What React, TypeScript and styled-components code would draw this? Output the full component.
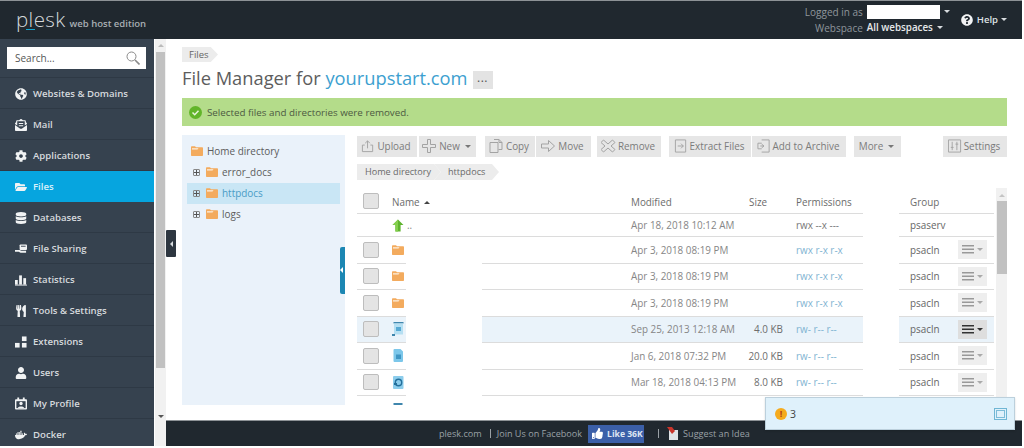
import React from "react";
import styled, { createGlobalStyle } from "styled-components";
import {
  FaGlobeAmericas,
  FaEnvelopeOpenText,
  FaCog,
  FaFolderOpen,
  FaDatabase,
  FaUser,
  FaDocker,
  FaUtensils,
  FaThumbsUp,
  FaQuestionCircle,
} from "react-icons/fa";

const GlobalStyle = createGlobalStyle`
  html, body {
    margin: 0;
    padding: 0;
    width: 1024px;
    height: 448px;
    overflow: hidden;
    background: #fff;
    font-family: "Open Sans", "Liberation Sans", sans-serif;
  }
  * { box-sizing: border-box; }
`;

const Page = styled.div`
  position: relative;
  width: 1024px;
  height: 448px;
  display: flex;
  flex-direction: column;
  background: #fff;
  overflow: hidden;
`;

const Header = styled.header`
  flex: none;
  height: 39px;
  width: 1022px;
  background: #20282f;
  border-top: 1px solid #8d9296;
  display: flex;
  align-items: center;
  justify-content: space-between;
  padding: 0 15px 0 16px;
`;

const Logo = styled.div`
  display: flex;
  align-items: baseline;
  gap: 4px;
  margin-top: -3px;
`;

const LogoWord = styled.span`
  position: relative;
  font-size: 20.5px;
  font-weight: 300;
  letter-spacing: 0.4px;
  color: #d4d8db;
  &::after {
    content: "";
    position: absolute;
    left: 10px;
    bottom: 3px;
    width: 9px;
    height: 1px;
    background: #19a5cf;
  }
`;

const LogoEdition = styled.span`
  font-size: 9.5px;
  font-weight: 600;
  color: #a8aeb3;
`;

const UserArea = styled.div`
  display: flex;
  align-items: center;
  gap: 11px;
  margin-top: -1px;
`;

const Account = styled.div`
  display: grid;
  grid-template-columns: auto auto;
  column-gap: 4px;
  row-gap: 2px;
  font-size: 10px;
  line-height: 14px;
`;

const AccountLabel = styled.span`
  color: #8f969c;
  text-align: right;
`;

const AccountValue = styled.span`
  display: flex;
  align-items: center;
  gap: 1px;
  color: #e6e8ea;
  font-weight: 600;
  font-size: 9.8px;
`;

const NameBox = styled.span`
  display: block;
  width: 73px;
  height: 14px;
  background: #fff;
`;

const Caret = styled.span<{ $color?: string }>`
  display: inline-block;
  width: 0;
  height: 0;
  margin-left: 3px;
  border-left: 3px solid transparent;
  border-right: 3px solid transparent;
  border-top: 3px solid ${({ $color }) => $color ?? "#d8dcdf"};
`;

const UpCaret = styled.span`
  display: inline-block;
  width: 0;
  height: 0;
  margin-left: 2px;
  vertical-align: 2px;
  border-left: 3px solid transparent;
  border-right: 3px solid transparent;
  border-bottom: 3px solid #444;
`;

const Help = styled.div`
  display: flex;
  align-items: center;
  gap: 4px;
  font-size: 9.5px;
  font-weight: 600;
  color: #dfe2e4;
  svg {
    color: #f2f3f4;
    font-size: 12px;
  }
  ${Caret} {
    margin-left: -1px;
  }
`;

const Body = styled.div`
  flex: none;
  height: 407px;
  display: flex;
`;

const Sidebar = styled.nav`
  flex: none;
  width: 154px;
  height: 407px;
  background: #36424f;
  overflow: hidden;
`;

const SearchWrap = styled.div`
  height: 39px;
  padding: 8px 8px 0 7px;
  border-bottom: 1px solid #2e3945;
`;

const SearchBox = styled.div`
  height: 22px;
  background: #fff;
  display: flex;
  align-items: center;
  justify-content: space-between;
  padding: 0 6px 0 8px;
  font-size: 10px;
  color: #555;
`;

const NavItem = styled.div<{ $active?: boolean }>`
  height: 31px;
  display: flex;
  align-items: center;
  padding: 1px 0 0 15px;
  gap: 6px;
  font-size: 9.6px;
  font-weight: 600;
  color: ${({ $active }) => ($active ? "#d9f1fb" : "#d6dade")};
  background: ${({ $active }) => ($active ? "#06a5df" : "transparent")};
  border-bottom: 1px solid ${({ $active }) => ($active ? "#06a5df" : "#2e3945")};
`;

const NavIcon = styled.span`
  flex: none;
  width: 12px;
  height: 13px;
  display: flex;
  align-items: center;
  justify-content: center;
  font-size: 12px;
  color: #f1f3f4;
`;

const PageScroll = styled.div`
  flex: none;
  width: 11px;
  margin-left: 1px;
  padding-top: 5px;
  background: #f1f1f1;
  display: flex;
  flex-direction: column;
  align-items: center;
`;

const ScrollCaret = styled.span<{ $down?: boolean; $color?: string }>`
  flex: none;
  width: 0;
  height: 0;
  border-left: 3px solid transparent;
  border-right: 3px solid transparent;
  ${({ $down, $color }) =>
    $down
      ? `border-top: 3px solid ${$color ?? "#555"};`
      : `border-bottom: 3px solid ${$color ?? "#bbb"};`}
`;

const PageThumb = styled.div`
  width: 9px;
  height: 316px;
  margin-top: 5px;
  background: #c1c1c1;
`;

const PageScrollDown = styled.div`
  margin-top: auto;
  padding-bottom: 6px;
`;

const Main = styled.div`
  flex: none;
  width: 856px;
  display: flex;
  flex-direction: column;
`;

const Content = styled.main`
  flex: none;
  height: 381px;
  padding: 8px 15px 0 16px;
`;

const Crumb = styled.div`
  width: 36px;
  height: 15px;
  padding-left: 7px;
  font-size: 9.5px;
  line-height: 15px;
  color: #666;
  background: #ececec;
  clip-path: polygon(0 0, 80% 0, 100% 50%, 80% 100%, 0 100%);
`;

const TitleRow = styled.div`
  display: flex;
  align-items: center;
  gap: 5px;
  height: 24px;
  margin-top: 4px;
`;

const Title = styled.h1`
  margin: 0;
  font-size: 18.3px;
  font-weight: 400;
  line-height: 24px;
  color: #5d5d5d;
  white-space: nowrap;
`;

const TitleLink = styled.span`
  color: #3d9fd0;
`;

const DotsButton = styled.div`
  width: 20px;
  height: 18px;
  margin-top: 3px;
  background: #e3e3e3;
  color: #555;
  font-size: 12px;
  line-height: 13px;
  text-align: center;
  letter-spacing: 0.5px;
`;

const Alert = styled.div`
  height: 28px;
  margin-top: 8px;
  background: #b4dc8a;
  display: flex;
  align-items: center;
  padding-left: 7px;
  gap: 5px;
  font-size: 9.8px;
  color: #4d5a42;
`;

const Workspace = styled.div`
  display: flex;
  gap: 12px;
  margin-top: 9px;
`;

const Tree = styled.aside`
  position: relative;
  flex: none;
  width: 163px;
  height: 270px;
  background: #eaf2fa;
  padding: 6px 5px 0;
`;

const TreeHandle = styled.div`
  position: absolute;
  right: 0;
  top: 112px;
  width: 5px;
  height: 47px;
  background: #1c87b3;
  border-radius: 2px 0 0 2px;
`;

const TreeRow = styled.div<{ $selected?: boolean; $root?: boolean }>`
  height: 21px;
  display: flex;
  align-items: center;
  gap: 4px;
  padding: 0 0 1px ${({ $root }) => ($root ? "4px" : "6px")};
  font-size: 9.95px;
  color: ${({ $selected }) => ($selected ? "#4a9cc6" : "#5c5c5c")};
  background: ${({ $selected }) => ($selected ? "#c9e6f5" : "transparent")};
`;

const Expander = styled.span`
  flex: none;
  width: 7px;
  height: 7px;
  margin-right: 2px;
  border: 1px solid #888;
  border-radius: 1px;
  background:
    linear-gradient(#555, #555) center / 5px 1px no-repeat,
    linear-gradient(#555, #555) center / 1px 5px no-repeat;
`;

const Browser = styled.section`
  flex: none;
  width: 650px;
  padding-top: 1px;
`;

const Toolbar = styled.div`
  display: flex;
  height: 21px;
`;

const ToolButton = styled.div<{ $w: number; $gap?: number; $push?: boolean }>`
  flex: none;
  width: ${({ $w }) => $w}px;
  margin-right: ${({ $gap }) => $gap ?? 0}px;
  margin-left: ${({ $push }) => ($push ? "auto" : "0")};
  height: 21px;
  padding: 0 2px 1px 0;
  background: #e6e6e6;
  color: #7b7b7b;
  font-size: 9.9px;
  display: flex;
  align-items: center;
  justify-content: center;
  gap: 2px;
  white-space: nowrap;
  svg {
    flex: none;
  }
`;

const PathBar = styled.div`
  display: flex;
  margin-top: 7px;
  height: 16px;
`;

const PathStep = styled.div<{ $w: number; $first?: boolean }>`
  width: ${({ $w }) => $w}px;
  margin-left: ${({ $first }) => ($first ? "0" : "-7px")};
  padding-left: ${({ $first }) => ($first ? "8px" : "14px")};
  font-size: 9.1px;
  line-height: 16px;
  color: #696969;
  background: #ececec;
  clip-path: ${({ $first }) =>
    $first
      ? "polygon(0 0, calc(100% - 7px) 0, 100% 50%, calc(100% - 7px) 100%, 0 100%)"
      : "polygon(0 0, calc(100% - 7px) 0, 100% 50%, calc(100% - 7px) 100%, 0 100%, 7px 50%)"};
`;

const TableArea = styled.div`
  margin-top: 8px;
  height: 217px;
  overflow: hidden;
  display: flex;
`;

const Rows = styled.div`
  flex: none;
  width: 637px;
`;

const Row = styled.div<{ $h: number }>`
  display: grid;
  grid-template-columns: 49px 76px 149px 109px 43px 80px 36px 95px;
  height: ${({ $h }) => $h}px;
  font-size: 9.9px;
  color: #868686;
`;

const Cell = styled.div<{ $hi?: boolean; $plain?: boolean; $span?: number }>`
  display: flex;
  align-items: center;
  min-width: 0;
  white-space: nowrap;
  background: ${({ $hi }) => ($hi ? "#eaf3fa" : "#fff")};
  border-bottom: ${({ $plain }) => ($plain ? "none" : "1px solid #dcdcdc")};
  ${({ $span }) => ($span ? `grid-column: span ${$span};` : "")}
`;

const HeadText = styled.span<{ $left?: number }>`
  color: #6b6b6b;
  margin-left: ${({ $left }) => $left ?? 0}px;
  padding-top: 2px;
`;

const SizeCell = styled(Cell)`
  justify-content: flex-end;
  color: #6d6d6d;
`;

const Perms = styled.span<{ $link?: boolean }>`
  margin-left: 13px;
  color: ${({ $link }) => ($link ? "#7fb4d2" : "#777")};
`;

const GroupCell = styled(Cell)`
  padding-left: 11px;
  color: #666;
`;

const Check = styled.span<{ $low?: boolean }>`
  flex: none;
  width: 16px;
  height: 16px;
  margin: ${({ $low }) => ($low ? "12px" : "0")} 13px 0 6px;
  background: #e4e4e4;
  border: 1px solid #bdbdbd;
  border-radius: 2px;
`;

const UpDirIndent = styled.span`
  flex: none;
  width: 35px;
`;

const UpDirName = styled.span`
  margin-left: 3px;
`;

const RowMenu = styled.div<{ $hot?: boolean }>`
  flex: none;
  width: 29px;
  height: 19px;
  margin-left: auto;
  margin-right: 7px;
  display: flex;
  align-items: center;
  justify-content: center;
  background: ${({ $hot }) => ($hot ? "#dedede" : "#eeeeee")};
  color: ${({ $hot }) => ($hot ? "#333" : "#999")};
`;

const TableScroll = styled.div`
  flex: none;
  width: 11px;
  margin-left: 2px;
  background: #f1f1f1;
  display: flex;
  flex-direction: column;
  align-items: center;
  padding-top: 6px;
`;

const TableThumb = styled.div`
  width: 10px;
  height: 73px;
  margin-top: 4px;
  background: #c1c1c1;
`;

const SideHandle = styled.div`
  position: absolute;
  left: 166px;
  top: 230px;
  width: 10px;
  height: 27px;
  background: #2d3640;
  border-radius: 1px;
  display: flex;
  align-items: center;
  justify-content: center;
`;

const HandleArrow = styled.span`
  width: 0;
  height: 0;
  border-top: 3px solid transparent;
  border-bottom: 3px solid transparent;
  border-right: 3px solid #d8dcdf;
`;

const TreeHandleArrow = styled(HandleArrow)`
  position: absolute;
  left: 0;
  top: 20px;
  border-right-color: #fff;
`;

const Footer = styled.footer`
  flex: none;
  height: 26px;
  background: #20282f;
  border-top: 1px solid #8d9296;
  display: flex;
  align-items: center;
  padding-left: 273px;
  font-size: 9.1px;
  color: #9aa1a6;
`;

const FooterBar = styled.span<{ $gapL: number; $gapR: number }>`
  width: 1px;
  height: 9px;
  background: #9aa1a6;
  margin-left: ${({ $gapL }) => $gapL}px;
  margin-right: ${({ $gapR }) => $gapR}px;
`;

const LikeButton = styled.span`
  width: 56px;
  height: 18px;
  margin-left: 6px;
  background: #3b5fa8;
  color: #dfe6f3;
  font-size: 8.6px;
  font-weight: 700;
  white-space: nowrap;
  display: flex;
  align-items: center;
  gap: 4px;
  padding-left: 4px;
  svg {
    flex: none;
    font-size: 11px;
    color: #fff;
  }
`;

const Notice = styled.div`
  position: absolute;
  left: 765px;
  top: 397px;
  width: 250px;
  height: 33px;
  background: #dff1fb;
  border: 1px solid #bcd0dc;
  box-shadow: 0 1px 2px rgba(0, 0, 0, 0.15);
  display: flex;
  align-items: center;
  padding: 0 7px 0 9px;
  gap: 3px;
  font-size: 10.5px;
  color: #444;
`;

const NoticeBadge = styled.span`
  width: 12px;
  height: 12px;
  border-radius: 50%;
  background: #f5ab1e;
  color: #b3411a;
  font-size: 9px;
  font-weight: 700;
  line-height: 12px;
  text-align: center;
`;

const NoticeExpand = styled.span`
  width: 13px;
  height: 12px;
  margin-left: auto;
  border: 1px solid #6fb6d4;
  display: flex;
  align-items: center;
  justify-content: center;
  &::after {
    content: "";
    width: 7px;
    height: 6px;
    border: 1px solid #7cbcd8;
  }
`;

const FolderIcon = () => (
  <svg width="12" height="12" viewBox="0 0 12 12" style={{ flex: "none" }}>
    <path d="M0 2.2C0 1.6.4 1.2 1 1.2h3l1 1h6c.6 0 1 .4 1 1V10c0 .6-.4 1-1 1H1c-.6 0-1-.4-1-1z" fill="#f3ab5e" />
    <path d="M1 3.2h6.5L6.5 4.6H1z" fill="#fdf0e0" />
  </svg>
);

const FileIcon = ({ kind }: { kind: "script" | "doc" | "web" | "tail" }) => (
  <svg width="12" height="15" viewBox="0 0 12 15" style={{ flex: "none" }}>
    {kind === "script" && (
      <>
        <rect x="1.5" y="0" width="10" height="1.5" fill="#3f86ad" />
        <rect x="2" y="1.5" width="9" height="11" fill="#b5dff2" />
        <rect x="4" y="5" width="5" height="4" fill="#56a9d3" />
        <rect x="0" y="12" width="3" height="2" fill="#3f86ad" />
      </>
    )}
    {kind === "doc" && (
      <>
        <path d="M1.5 2a1 1 0 0 1 1-1h6L11 3.5V13a1 1 0 0 1-1 1H2.5a1 1 0 0 1-1-1z" fill="#7cc7ea" />
        <rect x="4" y="6.5" width="5" height="4.5" fill="#3f96c4" />
      </>
    )}
    {kind === "web" && (
      <>
        <rect x="1" y="1" width="10.5" height="13" rx="1" fill="#8ccdec" />
        <circle cx="6.5" cy="7.5" r="3.2" fill="none" stroke="#24709c" strokeWidth="1.4" />
        <rect x="2" y="8" width="3" height="2" fill="#24709c" />
      </>
    )}
    {kind === "tail" && <rect x="1.5" y="0" width="9" height="2" fill="#3f86ad" />}
  </svg>
);

const UpArrow = () => (
  <svg width="12" height="13" viewBox="0 0 12 13" style={{ flex: "none" }}>
    <path d="M6 .5 11.5 6H8.6v6.5H3.4V6H.5z" fill="#5eb32e" />
    <path d="M6 .5 .5 6h2.9v6.5H6z" fill="#84cf4d" />
  </svg>
);

const Stroke = ({ children, w = 14 }: { children: React.ReactNode; w?: number }) => (
  <svg width={w} height="14" viewBox="0 0 15 14" fill="none" stroke="#a3a3a3" strokeWidth="1">
    {children}
  </svg>
);

const toolIcons: Record<string, React.ReactNode> = {
  upload: (
    <Stroke>
      <path d="M4 6H1.5v7h11V6H10M7 9.5v-8M4.500 4 7 1.5 9.500 4" />
    </Stroke>
  ),
  plus: (
    <Stroke w={15}>
      <path d="M5.5.5h3v5h5v3h-5v5h-3v-5h-5v-3h5z" />
    </Stroke>
  ),
  copy: (
    <Stroke w={15}>
      <path d="M5 .5h5l3 3v7H9.5M1 3.5h8v10H1zM10 .5v3h3" />
    </Stroke>
  ),
  move: (
    <Stroke w={15}>
      <path d="M.5 5h7V1.5l6 5.5-6 5.5V9h-7z" />
    </Stroke>
  ),
  remove: (
    <Stroke w={15}>
      <path d="M2.5 1 7 5l4.500-4L14 3.5 10 7l4 3.5-2.500 2.500L7 9l-4.500 4L0 10.5 4 7 0 3.5z" />
    </Stroke>
  ),
  extract: (
    <Stroke>
      <path d="M1.5.5h11v13h-11zM4 7h6M7.5 4.500 10 7 7.5 9.500" />
    </Stroke>
  ),
  archive: (
    <Stroke>
      <path d="M5 .5h8v13H5M5 4H1v6h4M7 7H3.5M5 5l2.500 2L5 9" />
    </Stroke>
  ),
  settings: (
    <Stroke>
      <path d="M.5.5h13v13H.5zM4.500 2.500v9M9.500 2.500v9M3 8.500h3M8 5h3" />
    </Stroke>
  ),
};

const SearchGlyph = () => (
  <svg width="14" height="14" viewBox="0 0 14 14" fill="none" stroke="#8a8a8a" strokeWidth="1">
    <circle cx="5.5" cy="5.5" r="4.5" />
    <path d="m9 9 4.5 4.5" strokeWidth="1.6" />
  </svg>
);

const MenuLines = () => (
  <svg width="12" height="9" viewBox="0 0 12 9" fill="currentColor">
    <rect width="12" height="1.5" />
    <rect y="3.5" width="12" height="1.5" />
    <rect y="7" width="12" height="1.5" />
  </svg>
);

const CheckBadge = () => (
  <svg width="13" height="13" viewBox="0 0 13 13" style={{ flex: "none" }}>
    <circle cx="6.5" cy="6.5" r="6.5" fill="#62b52a" />
    <path d="m3.5 6.5 2.2 2.2 3.8-4" fill="none" stroke="#e9f5dc" strokeWidth="1.5" />
  </svg>
);

const BarsGlyph = () => (
  <svg width="13" height="12" viewBox="0 0 13 12" fill="currentColor">
    <rect x="0" y="6" width="3" height="5" />
    <rect x="4.5" y="1" width="3" height="10" />
    <rect x="9" y="4" width="3" height="7" />
    <rect x="0" y="11" width="13" height="1" />
  </svg>
);

const BlocksGlyph = () => (
  <svg width="13" height="12" viewBox="0 0 13 12" fill="currentColor">
    <rect x="7.5" y="0" width="5" height="5" />
    <rect x="0" y="7" width="5" height="5" />
    <rect x="7.5" y="7" width="5" height="5" />
  </svg>
);

const ShareGlyph = () => (
  <svg width="13" height="12" viewBox="0 0 13 12" fill="currentColor">
    <rect x="5" y="1" width="8" height="6" rx="1" />
    <rect x="6.5" y="2.5" width="5" height="1" fill="#36424f" />
    <path d="M0 7h5l2 1h5v2H6L4 9H0z" />
  </svg>
);

const ProfileGlyph = () => (
  <svg width="13" height="13" viewBox="0 0 13 13" fill="currentColor">
    <rect x="0" y="2" width="13" height="11" rx="1" />
    <rect x="1.5" y="4" width="10" height="7.5" fill="#36424f" />
    <circle cx="6.5" cy="6.5" r="1.8" />
    <path d="M3 11.5c0-2.5 7-2.5 7 0z" />
    <rect x="2.5" y="0" width="2" height="3" />
    <rect x="8.5" y="0" width="2" height="3" />
  </svg>
);

const SuggestGlyph = () => (
  <svg width="12" height="14" viewBox="0 0 12 14" style={{ margin: "0 4px 0 8px" }}>
    <path d="M2 3h9v10H2z" fill="#dfe3e6" />
    <path d="M0 0h5l3 4-3 3z" fill="#c9352b" />
  </svg>
);

const navItems: { label: string; icon: React.ReactNode; active?: boolean }[] = [
  { label: "Websites & Domains", icon: <FaGlobeAmericas /> },
  { label: "Mail", icon: <FaEnvelopeOpenText /> },
  { label: "Applications", icon: <FaCog /> },
  { label: "Files", icon: <FaFolderOpen />, active: true },
  { label: "Databases", icon: <FaDatabase /> },
  { label: "File Sharing", icon: <ShareGlyph /> },
  { label: "Statistics", icon: <BarsGlyph /> },
  { label: "Tools & Settings", icon: <FaUtensils /> },
  { label: "Extensions", icon: <BlocksGlyph /> },
  { label: "Users", icon: <FaUser /> },
  { label: "My Profile", icon: <ProfileGlyph /> },
  { label: "Docker", icon: <FaDocker /> },
];

type FileRow = {
  icon: React.ReactNode;
  date: string;
  size: string;
  perms: string;
  hi?: boolean;
};

const files: FileRow[] = [
  { icon: <FolderIcon />, date: "Apr 3, 2018 08:19 PM", size: "", perms: "rwx r-x r-x" },
  { icon: <FolderIcon />, date: "Apr 3, 2018 08:19 PM", size: "", perms: "rwx r-x r-x" },
  { icon: <FolderIcon />, date: "Apr 3, 2018 08:19 PM", size: "", perms: "rwx r-x r-x" },
  { icon: <FileIcon kind="script" />, date: "Sep 25, 2013 12:18 AM", size: "4.0 KB", perms: "rw- r-- r--", hi: true },
  { icon: <FileIcon kind="doc" />, date: "Jan 6, 2018 07:32 PM", size: "20.0 KB", perms: "rw- r-- r--" },
  { icon: <FileIcon kind="web" />, date: "Mar 18, 2018 04:13 PM", size: "8.0 KB", perms: "rw- r-- r--" },
];

const App = () => (
  <Page>
    <GlobalStyle />
    <Header>
      <Logo>
        <LogoWord>plesk</LogoWord>
        <LogoEdition>web host edition</LogoEdition>
      </Logo>
      <UserArea>
        <Account>
          <AccountLabel>Logged in as</AccountLabel>
          <AccountValue>
            <NameBox />
            <Caret />
          </AccountValue>
          <AccountLabel>Webspace</AccountLabel>
          <AccountValue>
            All webspaces
            <Caret />
          </AccountValue>
        </Account>
        <Help>
          <FaQuestionCircle />
          Help
          <Caret />
        </Help>
      </UserArea>
    </Header>

    <Body>
      <Sidebar>
        <SearchWrap>
          <SearchBox>
            Search...
            <SearchGlyph />
          </SearchBox>
        </SearchWrap>
        {navItems.map((item) => (
          <NavItem key={item.label} $active={item.active}>
            <NavIcon>{item.icon}</NavIcon>
            {item.label}
          </NavItem>
        ))}
      </Sidebar>

      <PageScroll>
        <ScrollCaret />
        <PageThumb />
        <PageScrollDown>
          <ScrollCaret $down />
        </PageScrollDown>
      </PageScroll>

      <Main>
        <Content>
          <Crumb>Files</Crumb>
          <TitleRow>
            <Title>
              File Manager for <TitleLink>yourupstart.com</TitleLink>
            </Title>
            <DotsButton>...</DotsButton>
          </TitleRow>
          <Alert>
            <CheckBadge />
            Selected files and directories were removed.
          </Alert>

          <Workspace>
            <Tree>
              <TreeRow $root>
                <FolderIcon />
                Home directory
              </TreeRow>
              <TreeRow>
                <Expander />
                <FolderIcon />
                error_docs
              </TreeRow>
              <TreeRow $selected>
                <Expander />
                <FolderIcon />
                httpdocs
              </TreeRow>
              <TreeRow>
                <Expander />
                <FolderIcon />
                logs
              </TreeRow>
              <TreeHandle>
                <TreeHandleArrow />
              </TreeHandle>
            </Tree>

            <Browser>
              <Toolbar>
                <ToolButton $w={60} $gap={2}>{toolIcons.upload}Upload</ToolButton>
                <ToolButton $w={57} $gap={9}>
                  {toolIcons.plus}New<Caret $color="#777" />
                </ToolButton>
                <ToolButton $w={50} $gap={1}>{toolIcons.copy}Copy</ToolButton>
                <ToolButton $w={55} $gap={6}>{toolIcons.move}Move</ToolButton>
                <ToolButton $w={64} $gap={8}>{toolIcons.remove}Remove</ToolButton>
                <ToolButton $w={82} $gap={1}>{toolIcons.extract}Extract Files</ToolButton>
                <ToolButton $w={94} $gap={8}>{toolIcons.archive}Add to Archive</ToolButton>
                <ToolButton $w={47}>
                  More<Caret $color="#777" />
                </ToolButton>
                <ToolButton $w={64} $push>{toolIcons.settings}Settings</ToolButton>
              </Toolbar>

              <PathBar>
                <PathStep $w={84} $first>Home directory</PathStep>
                <PathStep $w={65}>httpdocs</PathStep>
              </PathBar>

              <TableArea>
                <Rows>
                  <Row $h={26}>
                    <Cell $span={3}>
                      <Check />
                      <HeadText>
                        Name <UpCaret />
                      </HeadText>
                    </Cell>
                    <Cell>
                      <HeadText>Modified</HeadText>
                    </Cell>
                    <Cell>
                      <HeadText $left={9}>Size</HeadText>
                    </Cell>
                    <Cell>
                      <HeadText $left={13}>Permissions</HeadText>
                    </Cell>
                    <Cell $plain />
                    <Cell>
                      <HeadText $left={11}>Group</HeadText>
                    </Cell>
                  </Row>
                  <Row $h={23}>
                    <Cell $span={3}>
                      <UpDirIndent />
                      <UpArrow />
                      <UpDirName>..</UpDirName>
                    </Cell>
                    <Cell>Apr 18, 2018 10:12 AM</Cell>
                    <SizeCell />
                    <Cell>
                      <Perms>rwx --x ---</Perms>
                    </Cell>
                    <Cell $plain />
                    <GroupCell>psaserv</GroupCell>
                  </Row>
                  {files.map((file, i) => (
                    <Row key={i} $h={26.5}>
                      <Cell $hi={file.hi}>
                        <Check />
                        {file.icon}
                      </Cell>
                      <Cell $plain />
                      <Cell $hi={file.hi} />
                      <Cell $hi={file.hi}>{file.date}</Cell>
                      <SizeCell $hi={file.hi}>{file.size}</SizeCell>
                      <Cell $hi={file.hi}>
                        <Perms $link>{file.perms}</Perms>
                      </Cell>
                      <Cell $plain />
                      <GroupCell $hi={file.hi}>
                        psacln
                        <RowMenu $hot={file.hi}>
                          <MenuLines />
                          <Caret $color={file.hi ? "#333" : "#aaa"} />
                        </RowMenu>
                      </GroupCell>
                    </Row>
                  ))}
                  <Row $h={26.5}>
                    <Cell $plain>
                      <Check $low />
                      <FileIcon kind="tail" />
                    </Cell>
                  </Row>
                </Rows>
                <TableScroll>
                  <ScrollCaret $color="#c4c4c4" />
                  <TableThumb />
                </TableScroll>
              </TableArea>
            </Browser>
          </Workspace>
        </Content>

        <Footer>
          plesk.com
          <FooterBar $gapL={8} $gapR={6} />
          Join Us on Facebook
          <LikeButton>
            <FaThumbsUp />
            Like 36K
          </LikeButton>
          <FooterBar $gapL={14} $gapR={0} />
          <SuggestGlyph />
          Suggest an Idea
        </Footer>
      </Main>
    </Body>

    <SideHandle>
      <HandleArrow />
    </SideHandle>

    <Notice>
      <NoticeBadge>!</NoticeBadge>3
      <NoticeExpand />
    </Notice>
  </Page>
);

export default App;
